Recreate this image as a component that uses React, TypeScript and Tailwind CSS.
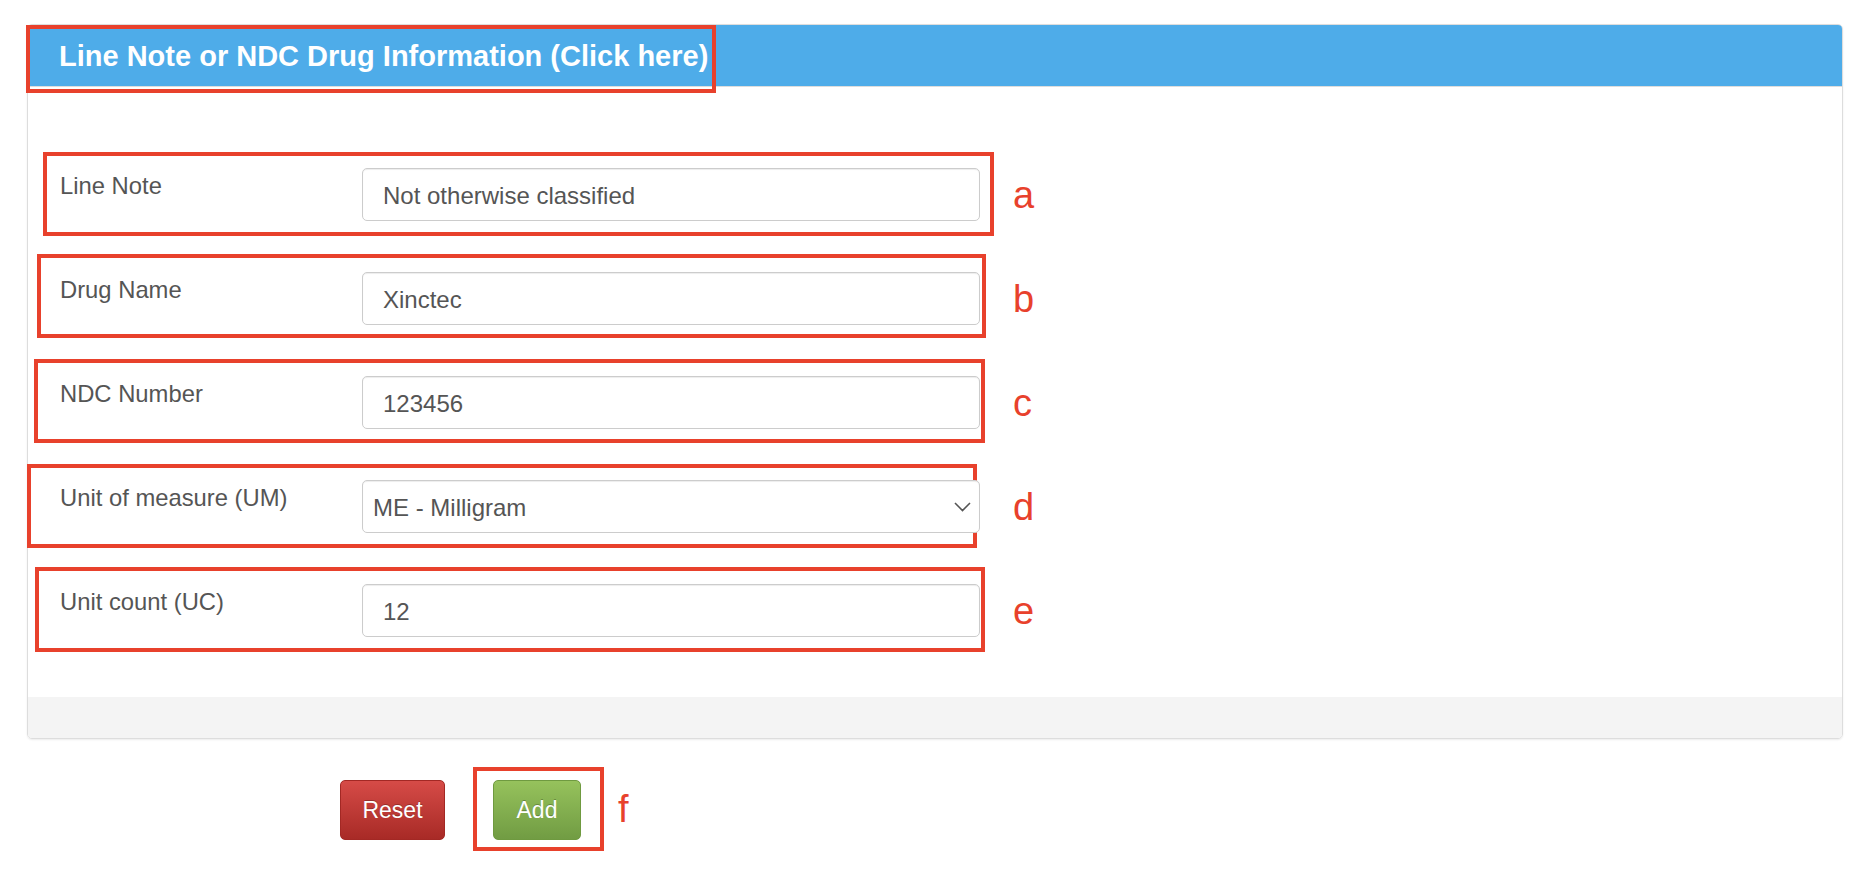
import React from "react";

type Row = {
  label: string;
  value: string;
  letter: string;
  select?: boolean;
  box: { left: number; top: number; width: number; height: number };
};

const rows: Row[] = [
  { label: "Line Note", value: "Not otherwise classified", letter: "a", box: { left: 15, top: -16, width: 951, height: 84 } },
  { label: "Drug Name", value: "Xinctec", letter: "b", box: { left: 9, top: -18, width: 949, height: 84 } },
  { label: "NDC Number", value: "123456", letter: "c", box: { left: 6, top: -17, width: 951, height: 84 } },
  { label: "Unit of measure (UM)", value: "ME - Milligram", letter: "d", select: true, box: { left: -1, top: -16, width: 950, height: 84 } },
  { label: "Unit count (UC)", value: "12", letter: "e", box: { left: 7, top: -17, width: 950, height: 85 } },
];

const font = { fontFamily: '"Liberation Sans", Arial, Helvetica, sans-serif' };

function FormRow({ row }: { row: Row }) {
  return (
    <div className="relative flex items-start h-[53px]">
      <div
        className="absolute border-[4px] border-[#e8412c] pointer-events-none"
        style={{ left: row.box.left, top: row.box.top, width: row.box.width, height: row.box.height }}
      />
      <div className="w-[334px] shrink-0 pl-[32px] pt-[1px] text-[23.8px] leading-[34px] text-[#555555]">
        {row.label}
      </div>
      {row.select ? (
        <div className="relative w-[618px] h-[53px] shrink-0 rounded-[5px] border border-[#cccccc] bg-white shadow-[inset_0_1px_1px_rgba(0,0,0,0.075)] flex items-center pl-[10px] text-[24px] text-[#555555]">
          <span className="pt-[2px]">{row.value}</span>
          <svg className="absolute right-[8px] top-[21px]" width="17" height="10" viewBox="0 0 17 10">
            <path d="M1 1 L8.5 8.5 L16 1" fill="none" stroke="#555555" strokeWidth="1.6" />
          </svg>
        </div>
      ) : (
        <div className="w-[618px] h-[53px] shrink-0 rounded-[5px] border border-[#cccccc] bg-white shadow-[inset_0_1px_1px_rgba(0,0,0,0.075)] flex items-center pl-[20px] text-[24px] text-[#555555]">
          <span className="pt-[2px]">{row.value}</span>
        </div>
      )}
      <div className="ml-[33px] mt-[8px] text-[38px] leading-[38px] text-[#e8412c]">{row.letter}</div>
    </div>
  );
}

export default function App() {
  return (
    <div className="w-[1864px] h-[874px] bg-white overflow-hidden" style={font}>
      <div className="pt-[24px] pl-[27px]">
        <div className="relative w-[1816px] rounded-[5px] border border-[#dddddd] shadow-[0_1px_2px_rgba(0,0,0,0.08)]">
          <div className="relative h-[62px] bg-[#4eace9] border-b border-[#dddddd] rounded-t-[4px] flex items-center pl-[31px]">
            <div className="absolute left-[-2px] top-0 w-[690px] h-[68px] border-[4px] border-[#e8412c]" />
            <span className="text-white font-bold text-[29px] leading-none pt-[1px]">
              Line Note or NDC Drug Information (Click here)
            </span>
          </div>
          <div className="bg-white pt-[81px] pb-[60px] flex flex-col gap-[51px]">
            {rows.map((r) => (
              <FormRow key={r.letter} row={r} />
            ))}
          </div>
          <div className="h-[41px] bg-[#f4f4f4] rounded-b-[4px]" />
        </div>
        <div className="flex items-start mt-[41px] pl-[313px]">
          <button className="w-[105px] h-[60px] rounded-[5px] border border-[#a32824] bg-gradient-to-b from-[#d64b47] to-[#a82a26] text-white text-[23px] [text-shadow:0_-1px_0_rgba(0,0,0,0.25)]">
            Reset
          </button>
          <div className="relative ml-[48px]">
            <div className="absolute left-[-20px] top-[-13px] w-[131px] h-[84px] border-[4px] border-[#e8412c]" />
            <button className="relative w-[88px] h-[60px] rounded-[5px] border border-[#6f9a40] bg-gradient-to-b from-[#96c25c] to-[#719c43] text-white text-[23px] [text-shadow:0_-1px_0_rgba(0,0,0,0.25)]">
              Add
            </button>
          </div>
          <div className="ml-[37px] mt-[10px] text-[38px] leading-[38px] text-[#e8412c]">f</div>
        </div>
      </div>
    </div>
  );
}
